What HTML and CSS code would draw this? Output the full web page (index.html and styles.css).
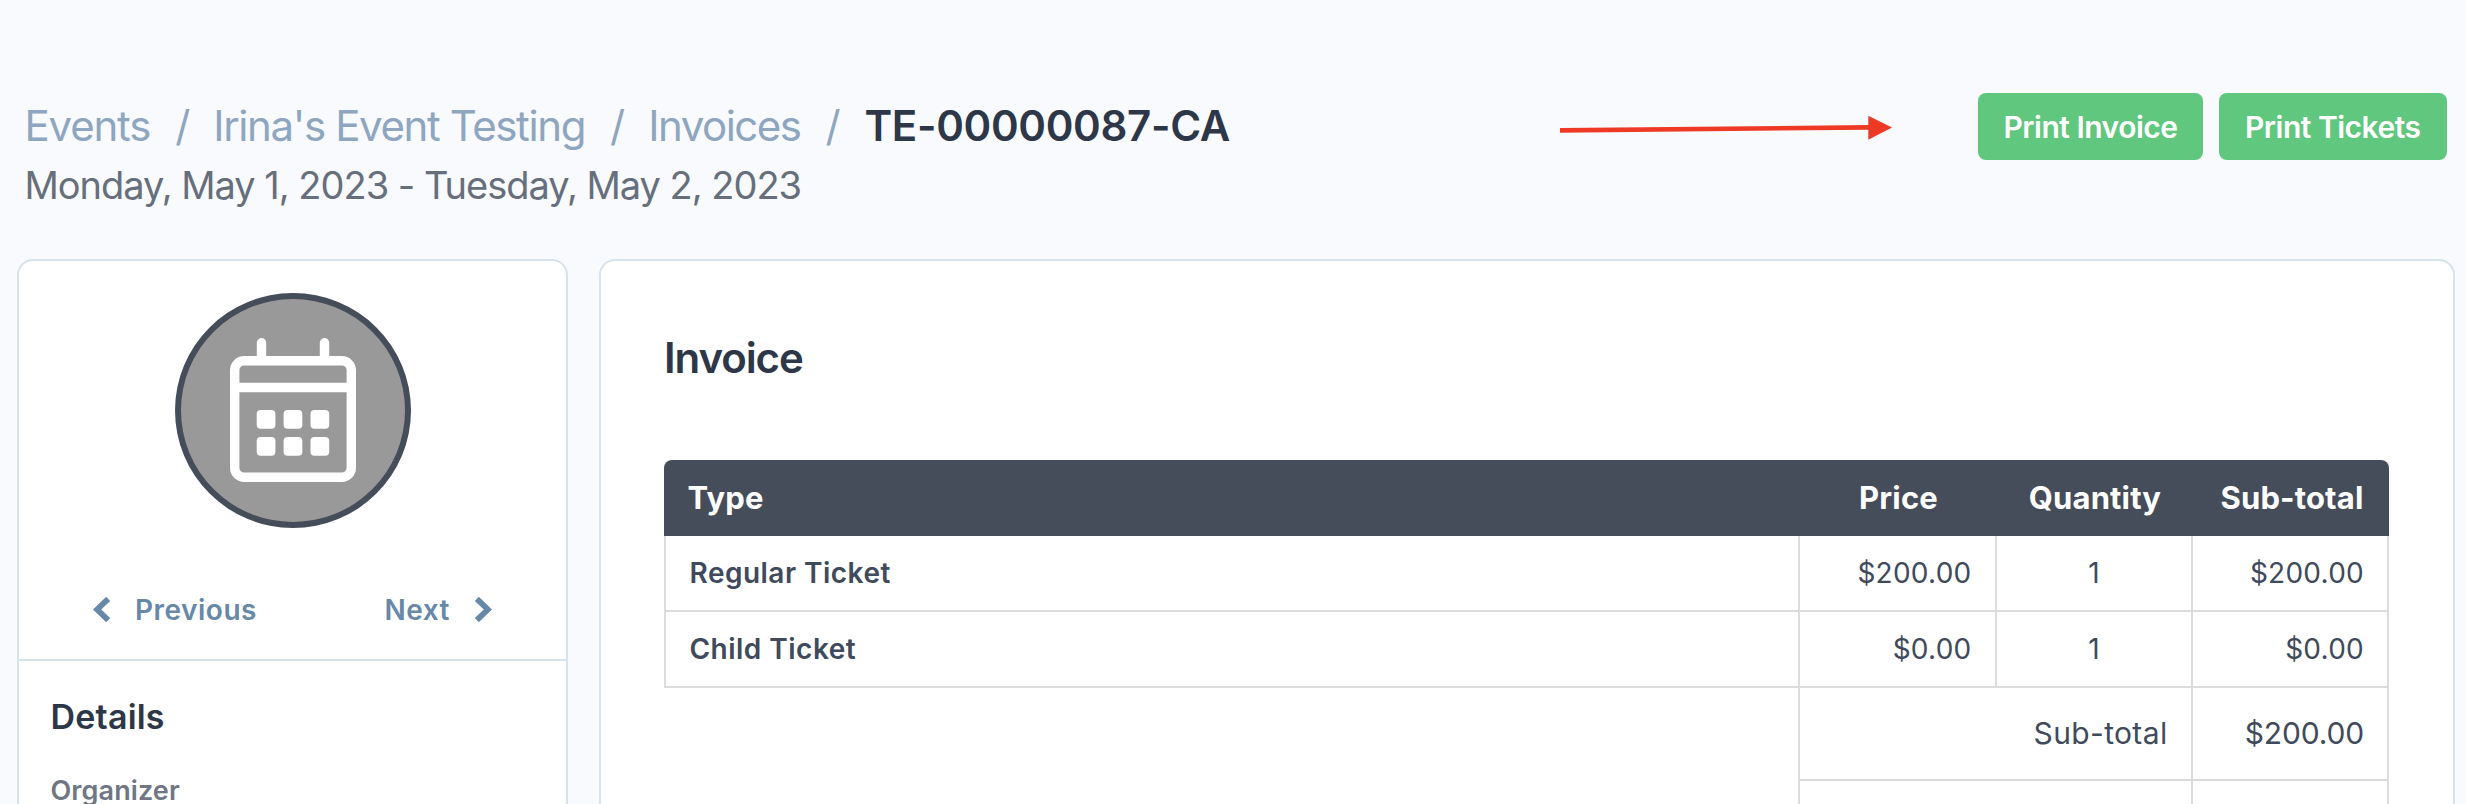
FILE: index.html
```html
<!DOCTYPE html>
<html lang="en">
<head>
<meta charset="utf-8">
<title>TE-00000087-CA</title>
<link rel="stylesheet" href="styles.css">
</head>
<body>
<header class="page-header">
  <div class="heading">
    <nav class="breadcrumb">
      <a class="crumb">Events</a><span class="slash">/</span><a class="crumb">Irina's Event Testing</a><span class="slash">/</span><a class="crumb crumb-tight">Invoices</a><span class="slash">/</span><span class="crumb-current">TE-00000087-CA</span>
    </nav>
    <div class="dates">Monday, May 1, 2023 - Tuesday, May 2, 2023</div>
  </div>
  <svg class="arrow" width="336" height="30" viewBox="0 0 336 30">
    <path d="M4 17.4 313 14.4" stroke="#ee3a24" stroke-width="4.6"/>
    <path d="M312.3 2.8 336 14.6 312.3 26.8Z" fill="#ee3a24"/>
  </svg>
  <div class="actions">
    <button class="btn btn-invoice">Print Invoice</button>
    <button class="btn btn-tickets">Print Tickets</button>
  </div>
</header>
<main class="columns">
  <aside class="card sidebar">
    <section class="profile">
      <div class="avatar">
        <svg width="126" height="144" viewBox="0 0 126 144">
          <g fill="none" stroke="#fff" stroke-width="9.4">
            <rect x="4.7" y="22.7" width="116.6" height="116.6" rx="9.5"/>
            <path d="M5 49.5h116"/>
            <path d="M31.5 20V4.7M94.5 20V4.7" stroke-linecap="round"/>
          </g>
          <g fill="#fff">
            <rect x="26.7" y="72" width="18.7" height="18.7" rx="4"/><rect x="53.6" y="72" width="18.7" height="18.7" rx="4"/><rect x="80.5" y="72" width="18.7" height="18.7" rx="4"/>
            <rect x="26.7" y="99" width="18.7" height="18.7" rx="4"/><rect x="53.6" y="99" width="18.7" height="18.7" rx="4"/><rect x="80.5" y="99" width="18.7" height="18.7" rx="4"/>
          </g>
        </svg>
      </div>
      <nav class="pager">
        <a class="pager-link"><svg width="18" height="27" viewBox="0 0 18 27"><path d="M15.2 2.9 4.1 13.5 15.2 24.1" class="chevron"/></svg>Previous</a>
        <a class="pager-link">Next<svg width="18" height="27" viewBox="0 0 18 27"><path d="M2.8 2.9 13.9 13.5 2.8 24.1" class="chevron"/></svg></a>
      </nav>
    </section>
    <section class="details">
      <h2 class="details-title">Details</h2>
      <div class="details-label">Organizer</div>
    </section>
  </aside>
  <section class="card invoice">
    <h1 class="invoice-title">Invoice</h1>
    <table class="table">
      <colgroup><col class="col-type"><col class="col-price"><col class="col-qty"><col class="col-sub"></colgroup>
      <thead>
        <tr><th class="left">Type</th><th>Price</th><th>Quantity</th><th>Sub-total</th></tr>
      </thead>
      <tbody>
        <tr><td class="name">Regular Ticket</td><td>$200.00</td><td class="qty">1</td><td>$200.00</td></tr>
        <tr><td class="name">Child Ticket</td><td>$0.00</td><td class="qty">1</td><td>$0.00</td></tr>
        <tr class="total"><td class="blank"></td><td colspan="2" class="total-label">Sub-total</td><td>$200.00</td></tr>
        <tr class="rest"><td class="blank"></td><td colspan="2"></td><td></td></tr>
      </tbody>
    </table>
  </section>
</main>
</body>
</html>
```
FILE: styles.css
```css
* { box-sizing: border-box; }
body {
  margin: 0;
  height: 804px;
  overflow: hidden;
  background: #f9fafe;
  color: #3f4a5c;
  font-family: Inter, "Liberation Sans", sans-serif;
}
svg { display: block; flex: none; }

.page-header {
  display: flex;
  align-items: flex-start;
  height: 259px;
  padding: 93px 19.5px 0 24.5px;
}
.heading { padding-top: 3px; flex: 1; }
.breadcrumb {
  display: flex;
  font-size: 42px;
  line-height: 60px;
  white-space: nowrap;
}
.crumb { color: #8ea6c0; letter-spacing: -1.38px; }
.crumb:first-child { letter-spacing: -1.2px; }
.crumb-tight { letter-spacing: -1.5px; }
.slash { color: #8ea6c0; margin: 0 23px 0 25px; }
.crumb-current { margin-left: .8px; color: #2d3748; font-weight: 600; letter-spacing: -.32px; }
.dates {
  color: #666f7b;
  font-size: 38px;
  line-height: 58px;
  letter-spacing: -1.02px;
}
.arrow { margin: 20px 86px 0 0; }
.actions { display: flex; gap: 16px; }
.btn {
  height: 67px;
  padding: 0;
  border: 0;
  border-radius: 8px;
  background: #60c77e;
  color: #fff;
  font: 600 30px/66px Inter, "Liberation Sans", sans-serif;
  letter-spacing: -.5px;
}
.btn-invoice { width: 225px; }
.btn-tickets { width: 227.5px; }

.columns {
  display: grid;
  grid-template-columns: 551px 1fr;
  gap: 31px;
  height: 545px;
  padding: 0 11px 0 17px;
  overflow: hidden;
}
.card {
  height: 545px;
  border: 2px solid #d6e3eb;
  border-bottom: 0;
  border-radius: 16px 16px 0 0;
  background: #fff;
  overflow: hidden;
}
.profile {
  height: 400px;
  padding: 32px 74px 0 74px;
  border-bottom: 2px solid #d6e3eb;
}
.avatar {
  display: flex;
  justify-content: center;
  width: 236px;
  height: 235px;
  margin: 0 auto;
  padding-top: 39px;
  border: 6px solid #454c5a;
  border-radius: 50%;
  background: #999;
}
.pager {
  display: flex;
  justify-content: space-between;
  margin-top: 61.5px;
  color: #6888a8;
  font-weight: 600;
  font-size: 28px;
  line-height: 40px;
  letter-spacing: .5px;
}
.pager-link { display: flex; align-items: center; gap: 24px; }
.chevron { fill: none; stroke: #6888a8; stroke-width: 5.8px; }
.details { padding: 35.6px 31.5px 0; }
.details-title {
  margin: 0 0 36px;
  color: #2d3748;
  font-weight: 600;
  font-size: 34px;
  line-height: 40px;
  letter-spacing: .2px;
}
.details-label {
  color: #6f7684;
  font-weight: 600;
  font-size: 27px;
  line-height: 32px;
  padding-top: 2px;
  letter-spacing: .1px;
}

.invoice { padding: 71.7px 64px 0 63px; }
.invoice-title {
  margin: 0 0 77.3px;
  color: #2d3748;
  font-weight: 600;
  font-size: 42px;
  line-height: 50px;
  letter-spacing: -1.1px;
}
.table {
  width: 1725px;
  table-layout: fixed;
  border-collapse: separate;
  border-spacing: 0;
  font-size: 28px;
  line-height: 34px;
}
.col-type { width: 1134px; }
.col-price { width: 197px; }
.col-qty { width: 196px; }
.col-sub { width: 198px; }
th {
  height: 76px;
  padding: 0 0 0 4px;
  background: #454c5a;
  color: #fff;
  font-weight: 700;
  font-size: 31px;
  text-align: center;
  letter-spacing: .15px;
}
th.left { padding-left: 23.5px; text-align: left; }
th:first-child { border-top-left-radius: 8px; }
th:last-child { border-top-right-radius: 8px; }
td {
  height: 76px;
  padding: 0 23.5px;
  border-left: 2px solid #dcdcdc;
  border-bottom: 2px solid #dcdcdc;
  text-align: right;
  letter-spacing: .25px;
}
td:last-child { padding-right: 23px; border-right: 2px solid #dcdcdc; }
.name { font-weight: 600; text-align: left; letter-spacing: .48px; }
.qty { text-align: center; }
.total td { height: 93px; font-size: 30px; letter-spacing: -.16px; }
.total .total-label { letter-spacing: .35px; }
.rest td { height: 23px; padding: 0; border-bottom: 0; line-height: 20px; }
td.blank { border: 0; }
```
